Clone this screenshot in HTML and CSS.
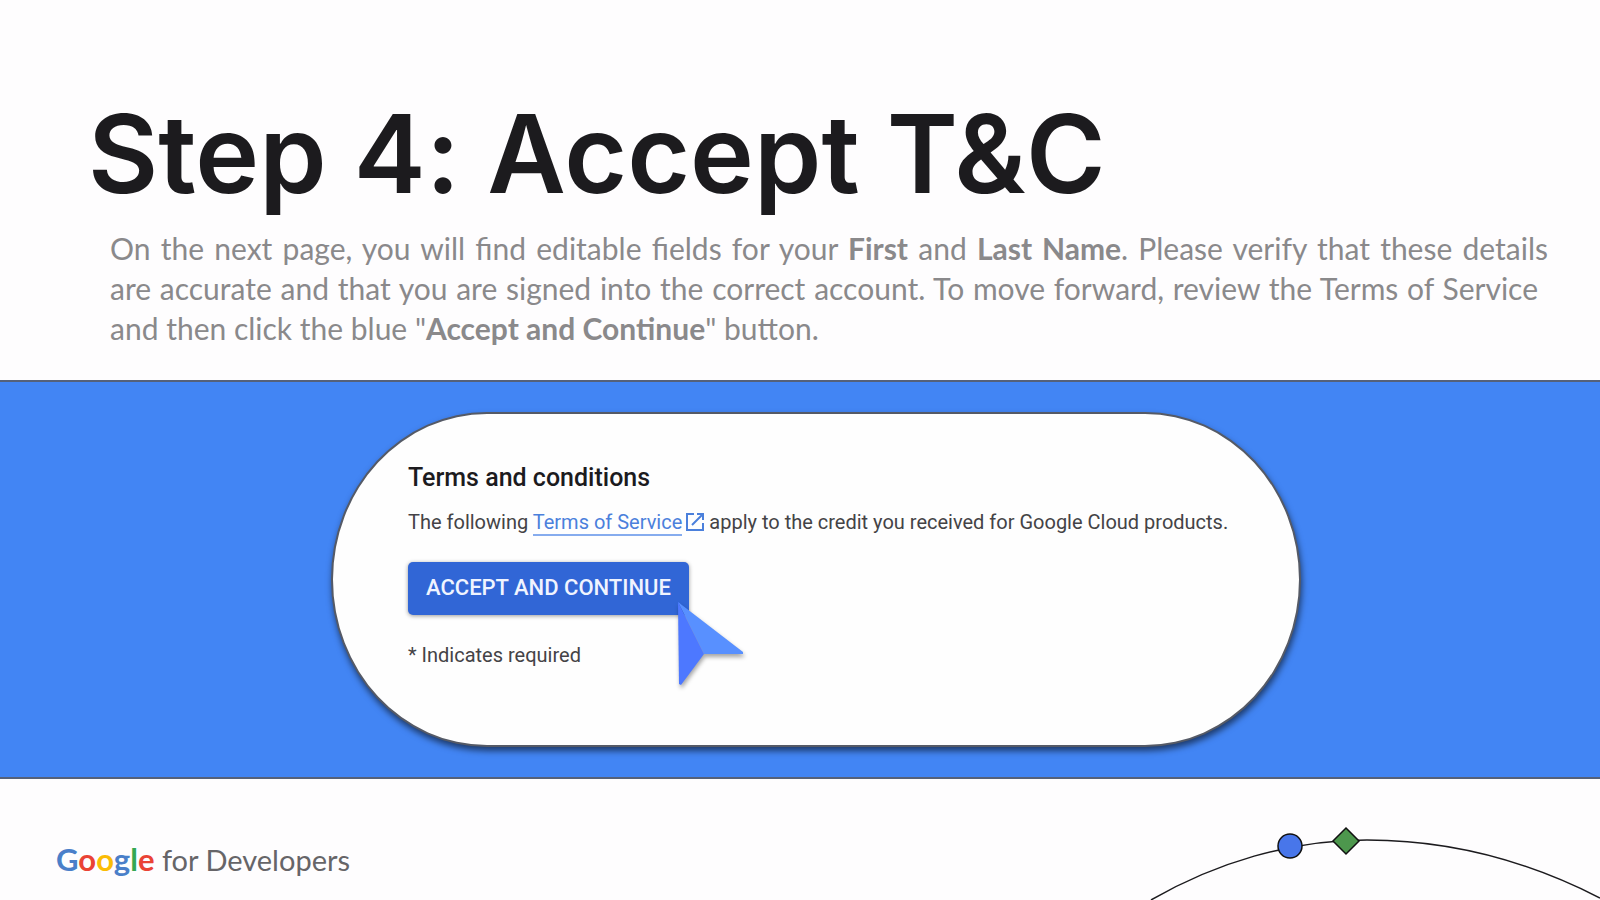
FILE: index.html
```html
<!DOCTYPE html>
<html lang="en">
<head>
  <meta charset="UTF-8">
  <meta name="viewport" content="width=device-width, initial-scale=1.0">
  <title>Step 4: Accept T&amp;C</title>
  <link rel="stylesheet" href="styles.css">
</head>
<body>

<header class="intro">
  <h1>Step 4: Accept T&amp;C</h1>
  <div class="lead">
    <p class="justify">On the next page, you will find editable fields for your <b>First</b> and <b>Last Name</b>. Please verify that these details</p>
    <p class="justify short">are accurate and that you are signed into the correct account. To move forward, review the Terms of Service</p>
    <p>and then click the blue "<b>Accept and Continue</b>" button.</p>
  </div>
</header>

<main class="band">
  <section class="card">
    <h2>Terms and conditions</h2>
    <p class="terms">The following <a href="#">Terms of Service</a><svg class="external" viewBox="0 0 18 18" aria-hidden="true"><path d="M8 1H1v16h16v-7M11 1h6v6M17 1L6 12" fill="none" stroke="currentColor" stroke-width="2"/></svg>apply to the credit you received for Google Cloud products.</p>
    <div class="action">
      <button type="button">ACCEPT AND CONTINUE</button>
      <svg class="cursor" viewBox="0 0 66 84" aria-hidden="true">
        <path d="M0 0L65 50V52L26 52Z" fill="#5890ff"/>
        <path d="M0 0L26 52L3 83L1 82Z" fill="#4d78ff"/>
      </svg>
    </div>
    <p class="required">* Indicates required</p>
  </section>
</main>

<footer class="footer">
  <div class="logo"><span class="google"><span class="blue">G</span><span class="red">o</span><span class="yellow">o</span><span class="blue">g</span><span class="green">l</span><span class="red">e</span></span> for Developers</div>
  <svg class="arc" viewBox="0 0 450 74" aria-hidden="true">
    <path d="M1 74C65 37 140 14 217 14C300 14 380 36 450 72" fill="none" stroke="#1c1b1e" stroke-width="1.5"/>
    <circle cx="140" cy="20" r="12" fill="#4876ea" stroke="#111" stroke-width="1.5"/>
    <path d="M196 2L209 15L196 28L183 15Z" fill="#4d974d" stroke="#111" stroke-width="1.5"/>
  </svg>
</footer>

</body>
</html>
```

FILE: styles.css
```css
* {
  box-sizing: border-box;
}

body {
  margin: 0;
  min-height: 100vh;
  display: flex;
  flex-direction: column;
  background: #fefdfe;
  font-family: Lato, sans-serif;
}

h1, h2, p {
  margin: 0;
}

.intro {
  padding: 86px 52px 32px 88px;
}

h1 {
  font-family: Inter, sans-serif;
  font-size: 108px;
  line-height: 136px;
  font-weight: 600;
  font-variant-ligatures: no-contextual;
  color: #1c1b1e;
}

.lead {
  padding: 6px 0 0 22px;
  font-size: 30px;
  line-height: 40px;
  color: #8a898b;
}

.justify {
  text-align: justify;
  text-align-last: justify;
}

.short {
  padding-right: 10px;
}

.band {
  display: flex;
  justify-content: center;
  padding: 30px 20px 30px 52px;
  background: #4285f4;
  border-top: 2px solid #55617a;
  border-bottom: 2px solid #55617a;
}

.card {
  width: 970px;
  max-width: 100%;
  padding: 47px 60px 74px 75px;
  background: #fefefe;
  border: 2px solid #555a66;
  border-radius: 156px / 50%;
  box-shadow: 1px 4px 6px rgba(0, 0, 0, 0.55);
  font-family: Roboto, sans-serif;
  font-size: 20px;
  line-height: 32px;
  color: #444346;
}

h2 {
  font-size: 25px;
  line-height: 34px;
  font-weight: 500;
  color: #1c1b1e;
}

.terms {
  padding: 11px 0 24px;
}

a {
  color: #4b80dc;
  text-decoration: none;
  border-bottom: 2px solid #86acee;
}

.external {
  width: 18px;
  height: 18px;
  margin: 0 5px 0 4px;
  vertical-align: -2px;
  color: #4b80dc;
}

.action {
  position: relative;
  width: fit-content;
}

button {
  display: block;
  padding: 0 18px 2px;
  height: 53px;
  border: 0;
  border-radius: 5px;
  background: #3166d6;
  box-shadow: 0 1px 4px rgba(0, 0, 0, 0.4);
  color: #f0f4ff;
  font-family: inherit;
  font-size: 22px;
  font-weight: 500;
  cursor: pointer;
}

/* pointer resting on the corner of the button */
.cursor {
  position: absolute;
  right: -55px;
  top: 40px;
  width: 66px;
  height: 84px;
  overflow: visible;
  filter: drop-shadow(1px 3px 2px rgba(0, 0, 0, 0.35));
}

.required {
  padding-top: 24px;
}

.footer {
  flex: 1;
  display: flex;
  justify-content: space-between;
  align-items: flex-end;
  padding-left: 56px;
}

.logo {
  padding-bottom: 20px;
  font-size: 29px;
  line-height: 40px;
  color: #666568;
}

.google {
  font-size: 31px;
  font-weight: bold;
}

.blue {
  color: #4a7fc9;
}

.red {
  color: #ea4335;
}

.yellow {
  color: #fbbc05;
}

.green {
  color: #34a853;
}

.arc {
  width: 450px;
  height: 74px;
}
```
